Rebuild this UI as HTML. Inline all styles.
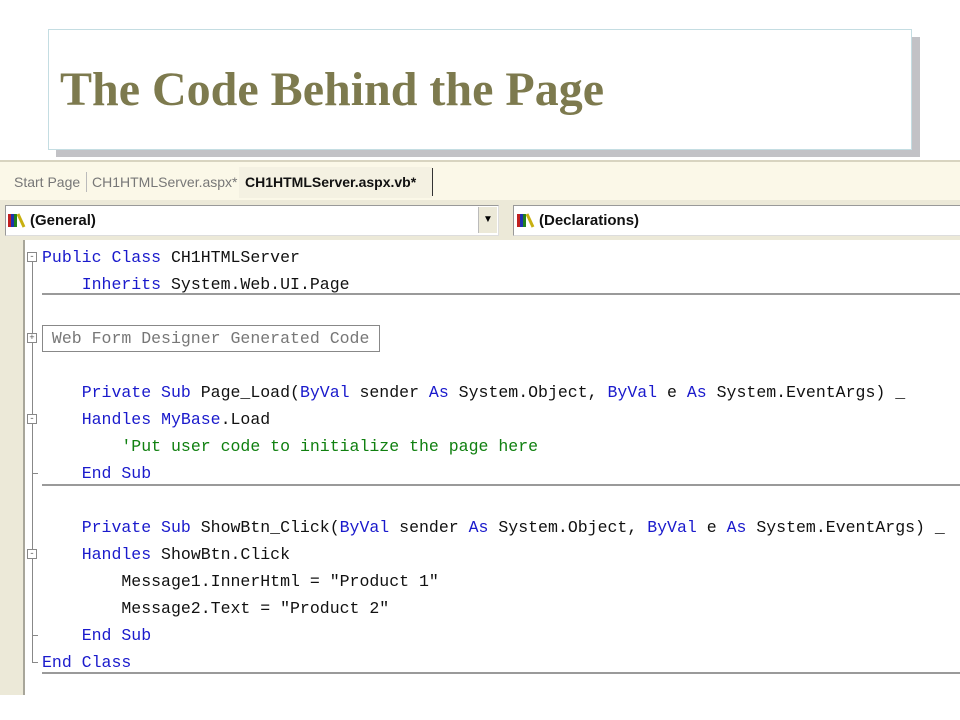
<!DOCTYPE html>
<html><head><meta charset="utf-8"><style>
body{margin:0;width:960px;height:720px;background:#fff;position:relative;overflow:hidden;font-family:"Liberation Sans",sans-serif}
.a{position:absolute}
.code{font-family:"Liberation Mono",monospace;font-size:16.55px;white-space:pre;color:#111;line-height:27px}
.k{color:#1a1acc}.c{color:#108010}
.sep{position:absolute;left:42px;right:0;height:2px;background:#9a9a9a}
.box{position:absolute;left:27px;width:8px;height:8px;border:1px solid #888;background:#fff;font-size:9px;line-height:8px;text-align:center;color:#555;font-family:"Liberation Mono",monospace}
.tick{position:absolute;left:32px;width:6px;height:1px;background:#888}
</style></head><body>
<div class="a" style="left:56px;top:37px;width:864px;height:120px;background:#c2c2c6"></div>
<div class="a" style="left:48px;top:29px;width:862px;height:119px;background:#fff;border:1px solid #c4dde2"></div>
<div class="a" style="left:60px;top:62px;font-family:'Liberation Serif',serif;font-weight:bold;font-size:48px;color:#7d7a4e">The Code Behind the Page</div>

<div class="a" style="left:0;top:160px;width:960px;height:40px;background:#fbf8e8;border-top:2px solid #d8d4c0"></div>
<div class="a" style="left:239px;top:167px;width:193px;height:31px;background:#f4f1e2"></div>
<div class="a" style="left:14px;top:174px;font-size:14px;color:#777">Start Page</div>
<div class="a" style="left:86px;top:172px;width:1px;height:20px;background:#bbb"></div>
<div class="a" style="left:92px;top:174px;font-size:14px;color:#777">CH1HTMLServer.aspx*</div>
<div class="a" style="left:245px;top:174px;font-size:14px;font-weight:bold;color:#111">CH1HTMLServer.aspx.vb*</div>
<div class="a" style="left:432px;top:168px;width:1px;height:28px;background:#333"></div>

<div class="a" style="left:0;top:200px;width:960px;height:40px;background:#ece9d8"></div>
<div class="a" style="left:5px;top:205px;width:492px;height:29px;background:#fff;border:1px solid #999;border-right-color:#ddd;border-bottom-color:#ddd"></div>
<div class="a" style="left:478px;top:207px;width:18px;height:26px;background:#ece9d8;border-left:1px solid #bbb;font-size:10px;text-align:center;line-height:26px">▼</div>
<div class="a" style="left:513px;top:205px;width:447px;height:29px;background:#fff;border:1px solid #999;border-right:none;border-bottom-color:#ddd"></div>
<svg class="a" style="left:8px;top:212px" width="24" height="16"><rect x="0" y="2" width="3" height="13" fill="#c02020"/><rect x="3" y="2" width="3" height="13" fill="#2030b0"/><rect x="6" y="2" width="3" height="13" fill="#208020"/><path d="M10 2 L16 15" stroke="#c8b010" stroke-width="3"/></svg>
<div class="a" style="left:30px;top:212px;font-size:15px;font-weight:bold;color:#111">(General)</div>
<svg class="a" style="left:517px;top:212px" width="24" height="16"><rect x="0" y="2" width="3" height="13" fill="#c02020"/><rect x="3" y="2" width="3" height="13" fill="#2030b0"/><rect x="6" y="2" width="3" height="13" fill="#208020"/><path d="M10 2 L16 15" stroke="#c8b010" stroke-width="3"/></svg>
<div class="a" style="left:539px;top:212px;font-size:15px;font-weight:bold;color:#111">(Declarations)</div>

<div class="a" style="left:0;top:240px;width:23px;height:455px;background:#ece9d8;border-right:2px solid #a8a69a"></div>
<div class="a" style="left:32px;top:262px;width:1px;height:400px;background:#888"></div>
<div class="box" style="top:252px">-</div>
<div class="box" style="top:333px;background:#fff">+</div>
<div class="box" style="top:414px">-</div>
<div class="box" style="top:549px">-</div>
<div class="tick" style="top:473px"></div>
<div class="tick" style="top:635px"></div>
<div class="tick" style="top:662px"></div>

<div class="sep" style="top:293px"></div>
<div class="sep" style="top:484px"></div>
<div class="sep" style="top:672px"></div>
<div class="a" style="left:42px;top:325px;width:336px;height:25px;border:1px solid #888"></div>

<div class="a code" style="left:42px;top:244px"><span class="k">Public Class</span> CH1HTMLServer
    <span class="k">Inherits</span> System.Web.UI.Page

 <span style="color:#777">Web Form Designer Generated Code</span>

    <span class="k">Private Sub</span> Page_Load(<span class="k">ByVal</span> sender <span class="k">As</span> System.Object, <span class="k">ByVal</span> e <span class="k">As</span> System.EventArgs) _
    <span class="k">Handles</span> <span class="k">MyBase</span>.Load
        <span class="c">'Put user code to initialize the page here</span>
    <span class="k">End Sub</span>

    <span class="k">Private Sub</span> ShowBtn_Click(<span class="k">ByVal</span> sender <span class="k">As</span> System.Object, <span class="k">ByVal</span> e <span class="k">As</span> System.EventArgs) _
    <span class="k">Handles</span> ShowBtn.Click
        Message1.InnerHtml = "Product 1"
        Message2.Text = "Product 2"
    <span class="k">End Sub</span>
<span class="k">End Class</span></div>
</body></html>
